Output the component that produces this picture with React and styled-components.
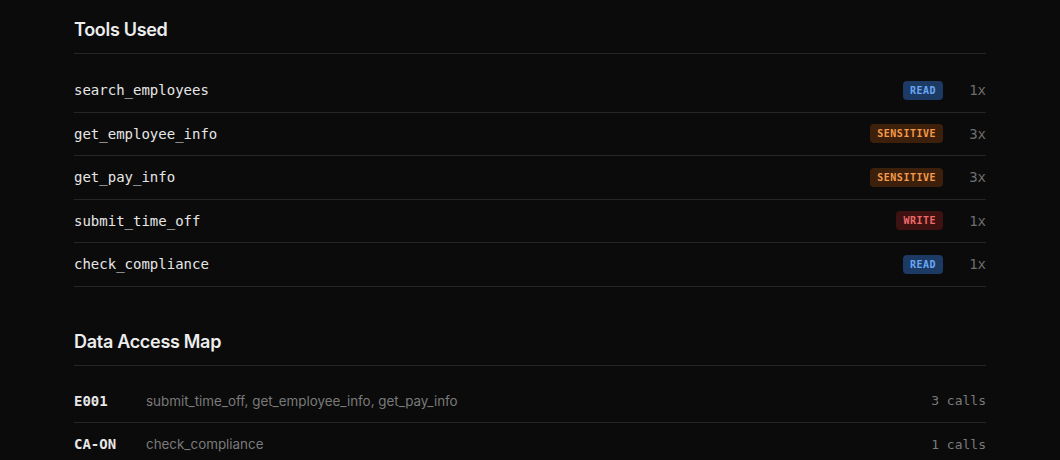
import React from 'react';
import styled, { createGlobalStyle } from 'styled-components';

const GlobalStyle = createGlobalStyle`
    html, body {
        margin: 0;
        padding: 0;
        background: #0b0b0b;
    }
    body {
        font-family: Inter, "Noto Sans", sans-serif;
        color: #ececec;
    }
`;

const tools = [
    { name: 'search_employees', level: 'read', count: 1 },
    { name: 'get_employee_info', level: 'sensitive', count: 3 },
    { name: 'get_pay_info', level: 'sensitive', count: 3 },
    { name: 'submit_time_off', level: 'write', count: 1 },
    { name: 'check_compliance', level: 'read', count: 1 },
];

const access = [
    { key: 'E001', tools: 'submit_time_off, get_employee_info, get_pay_info', calls: 3 },
    { key: 'CA-ON', tools: 'check_compliance', calls: 1 },
];

// badge colours per access level
const levels = {
    read: { bg: '#1c3a63', fg: '#69a7f5' },
    sensitive: { bg: '#3d200b', fg: '#f59a4a' },
    write: { bg: '#3f1212', fg: '#f06a6a' },
};

const Page = styled.div`
    padding: 16px 74px 0;
    display: flex;
    flex-direction: column;
    gap: 41px;
`;

const Section = styled.section`
    display: flex;
    flex-direction: column;
`;

const Heading = styled.h2`
    margin: 0;
    font-size: 18px;
    line-height: 28px;
    font-weight: 600;
    letter-spacing: -0.3px;
    color: #ededed;
    padding-bottom: 9px;
    border-bottom: 1px solid #262626;
`;

const List = styled.div`
    margin-top: ${props => props.offset || 15}px;
    display: flex;
    flex-direction: column;
`;

const Row = styled.div`
    box-sizing: border-box;
    height: 43.5px;
    display: flex;
    align-items: center;
    border-bottom: 1px solid #262626;
`;

const ToolName = styled.span`
    flex: 1;
    font-family: "DejaVu Sans Mono", monospace;
    font-size: 14px;
    color: #e6e6e6;
`;

const Badge = styled.span`
    font-family: "DejaVu Sans Mono", monospace;
    font-size: 10px;
    font-weight: 700;
    letter-spacing: 0.5px;
    line-height: 19px;
    padding: 0 7px;
    border-radius: 4px;
    background: ${props => levels[props.level].bg};
    color: ${props => levels[props.level].fg};
`;

const Count = styled.span`
    width: 43px;
    text-align: right;
    font-family: "DejaVu Sans Mono", monospace;
    font-size: 14px;
    color: #6e6e6e;
`;

const Key = styled.span`
    width: 72px;
    font-family: "DejaVu Sans Mono", monospace;
    font-size: 14px;
    font-weight: 700;
    color: #e6e6e6;
`;

const ToolList = styled.span`
    flex: 1;
    font-size: 13.4px;
    color: #7a7a7a;
`;

const Calls = styled.span`
    font-family: "DejaVu Sans Mono", monospace;
    font-size: 13px;
    color: #7a7a7a;
`;

export default function App() {
    return (
        <>
            <GlobalStyle />
            <Page>
                <Section>
                    <Heading>Tools Used</Heading>
                    <List>
                        {tools.map(t => (
                            <Row key={t.name}>
                                <ToolName>{t.name}</ToolName>
                                <Badge level={t.level}>{t.level.toUpperCase()}</Badge>
                                <Count>{t.count}x</Count>
                            </Row>
                        ))}
                    </List>
                </Section>
                <Section>
                    <Heading>Data Access Map</Heading>
                    <List offset={14}>
                        {access.map(a => (
                            <Row key={a.key}>
                                <Key>{a.key}</Key>
                                <ToolList>{a.tools}</ToolList>
                                <Calls>{a.calls} calls</Calls>
                            </Row>
                        ))}
                    </List>
                </Section>
            </Page>
        </>
    );
}
